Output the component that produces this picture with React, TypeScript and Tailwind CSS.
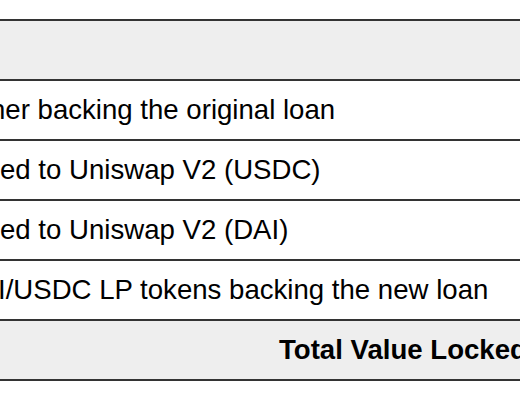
import React from 'react';

// visible slice of each row; offset = how far the cell text is scrolled off the left edge
const rows = [
  { text: 'her backing the original loan', offset: 'ml-[-10px]' },
  { text: 'ed to Uniswap V2 (USDC)', offset: 'ml-[0px]' },
  { text: 'ed to Uniswap V2 (DAI)', offset: 'ml-[0px]' },
  { text: 'I/USDC LP tokens backing the new loan', offset: 'ml-[-2px]' },
];

export default function App() {
  return (
    <div className="w-[520px] h-[400px] overflow-hidden bg-white pt-[19px] font-['Liberation_Sans',Arial,sans-serif] text-[27.6px] text-black">
      <div className="border-t-2 border-[#333]">
        {/* header */}
        <div className="h-[60px] border-b-2 border-[#333] bg-[#eeeeee]" />
        {rows.map((row, i) => (
          <div key={i} className="h-[60px] border-b-2 border-[#333] bg-white flex items-center overflow-hidden whitespace-nowrap">
            <span className={`shrink-0 ${row.offset}`}>{row.text}</span>
          </div>
        ))}
        {/* total */}
        <div className="h-[60px] border-b-2 border-[#333] bg-[#eeeeee] flex items-center overflow-hidden whitespace-nowrap">
          <span className="shrink-0 ml-[279px] font-bold">Total Value Locked</span>
        </div>
      </div>
    </div>
  );
}
